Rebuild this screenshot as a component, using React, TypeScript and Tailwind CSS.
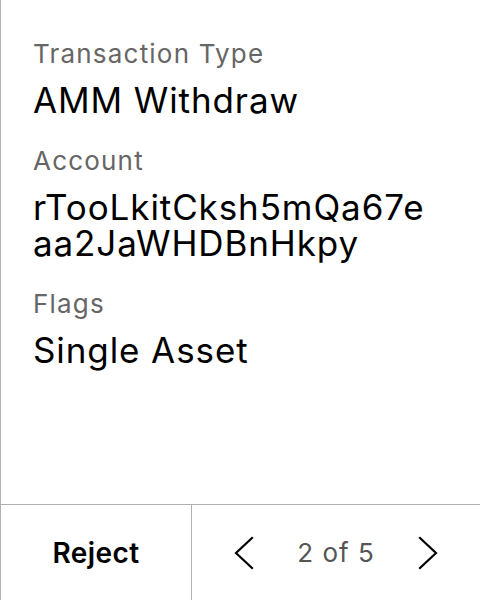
import { ReactNode } from "react";

function Field({ label, children }: { label: string; children: ReactNode }) {
  return (
    <div className="flex flex-col gap-3">
      <span className="text-[26px] leading-[32px] tracking-[1.2px] text-[#666666]">{label}</span>
      <span className="text-[35px] leading-[36px] tracking-[0.9px] text-black">{children}</span>
    </div>
  );
}

function Chevron({ dir }: { dir: "left" | "right" }) {
  return (
    <svg width="20" height="34" viewBox="0 0 20 34" fill="none">
      <path
        d={dir === "left" ? "M18 2 L2 17 L18 32" : "M2 2 L18 17 L2 32"}
        stroke="black"
        strokeWidth="2.2"
        strokeLinecap="square"
      />
    </svg>
  );
}

export default function App() {
  return (
    <div
      className="flex flex-col w-[480px] h-[600px] bg-white border-l border-[#b0b0b0]"
      style={{ fontFamily: "Inter, 'Liberation Sans', sans-serif" }}
    >
      <div className="flex-1 flex flex-col gap-[27px] pl-8 pr-4 pt-[38px]">
        <Field label="Transaction Type">AMM Withdraw</Field>
        <Field label="Account">
          rTooLkitCksh5mQa67e
          <br />
          aa2JaWHDBnHkpy
        </Field>
        <Field label="Flags">Single Asset</Field>
      </div>
      <div className="flex h-[96px] border-t border-[#b0b0b0]">
        <button className="w-[191px] flex items-center justify-center text-[28px] tracking-[0.4px] font-semibold text-black border-r border-[#b0b0b0]">
          Reject
        </button>
        <div className="flex-1 flex items-center justify-between px-[42px]">
          <Chevron dir="left" />
          <span className="text-[26px] tracking-[1px] text-[#555555]">2 of 5</span>
          <Chevron dir="right" />
        </div>
      </div>
    </div>
  );
}
